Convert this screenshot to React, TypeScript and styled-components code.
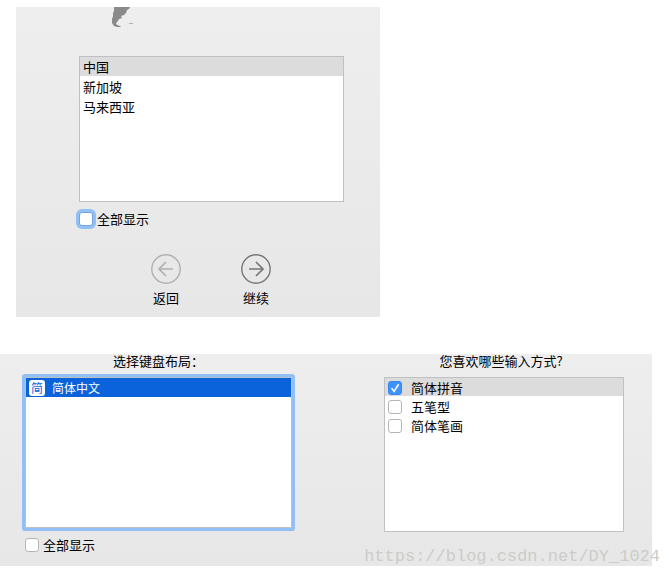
import React, { useState } from "react";
import styled, { createGlobalStyle, css } from "styled-components";

const GlobalStyle = createGlobalStyle`
  *, *::before, *::after { box-sizing: border-box; }
  body {
    margin: 0;
    background: #fff;
    color: #000;
    font-family: "Noto Sans CJK SC", sans-serif;
    font-size: 13px;
    line-height: 20px;
  }
`;

const Page = styled.main`
  position: relative;
  display: flex;
  flex-direction: column;
  gap: 37px;
  padding: 7px 17px 10px 0;
`;

const panel = css`
  background: linear-gradient(#eeeeee, #e7e7e7);
`;

const CountryPanel = styled.section`
  ${panel}
  max-width: 364px;
  margin-left: 16px;
  padding: 0 36px 9px 63px;
`;

const MapStrip = styled.div`
  height: 49px;
  padding-left: 28px;

  svg { display: block; }
`;

const List = styled.ul<{ $height: number; $focused?: boolean }>`
  height: ${(p) => p.$height}px;
  margin: 0;
  padding: 0;
  list-style: none;
  background: #fff;
  border: 1px solid #c0c0c0;
  border-radius: ${(p) => (p.$focused ? 1 : 0)}px;
  box-shadow: ${(p) => (p.$focused ? "0 0 0 3px #92bff5" : "none")};
`;

const CountryRow = styled.li<{ $selected: boolean }>`
  height: 19px;
  margin-bottom: 1px;
  padding-left: 3px;
  background: ${(p) => (p.$selected ? "#dcdcdc" : "transparent")};
  cursor: default;
`;

const LayoutRow = styled.li`
  display: flex;
  align-items: center;
  gap: 7px;
  height: 19px;
  padding-left: 3px;
  background: #0a63da;
  color: #fff;
  font-size: 12px;
`;

const LayoutBadge = styled.span`
  width: 16px;
  height: 16px;
  border-radius: 3px;
  background: #fff;
  color: #0a63da;
  line-height: 16px;
  text-align: center;
`;

const MethodRow = styled.li<{ $selected: boolean }>`
  height: 18px;
  margin-bottom: 1px;
  padding-left: 3px;
  background: ${(p) => (p.$selected ? "#dcdcdc" : "transparent")};
`;

const CheckLabel = styled.label<{ $gap: number }>`
  display: flex;
  align-items: center;
  gap: ${(p) => p.$gap}px;
`;

const Checkbox = styled.input<{ $ring?: boolean }>`
  appearance: none;
  display: grid;
  place-items: center;
  width: 14px;
  height: 14px;
  margin: 0;
  background: #fff;
  border: 1px solid ${(p) => (p.$ring ? "#74a5df" : "#b5b5b5")};
  border-radius: 3px;
  outline: none;
  box-shadow: ${(p) => (p.$ring ? "0 0 0 3px #92bff5" : "none")};

  &:checked {
    background: #3d93fb;
    border-color: #3388f2;
  }

  &:checked::before {
    content: "";
    width: 12px;
    height: 12px;
    background: #fff;
    clip-path: polygon(16% 55%, 27% 47%, 42% 67%, 74% 15%, 86% 23%, 43% 90%);
  }
`;

const ShowAll = styled.div`
  margin-top: 7px;
`;

const Navigation = styled.nav`
  display: flex;
  gap: 60px;
  margin-top: 25px;
  padding-left: 72px;
`;

const NavButton = styled.button<{ $muted?: boolean }>`
  display: flex;
  flex-direction: column;
  align-items: center;
  gap: 4px;
  width: 30px;
  padding: 0;
  border: 0;
  background: none;
  color: #000;
  font: inherit;
  white-space: nowrap;

  svg {
    display: block;
    color: ${(p) => (p.$muted ? "#b0b0b0" : "#777")};
  }
`;

const KeyboardPanel = styled.section`
  ${panel}
  display: grid;
  grid-template-columns: 267fr 240fr;
  column-gap: 92px;
  padding: 0 28px 11px 25px;
`;

const Heading = styled.h2<{ $inset?: number }>`
  height: 23px;
  margin: 0;
  padding-right: ${(p) => p.$inset ?? 0}px;
  font-size: 13px;
  font-weight: 400;
  line-height: 14px;
  text-align: center;
`;

const Watermark = styled.span`
  position: absolute;
  right: 9px;
  bottom: 9px;
  color: #ccccc8;
  font-family: "Liberation Mono", monospace;
  font-size: 17px;
  pointer-events: none;
`;

function LandTip() {
  return (
    <svg width="26" height="22" viewBox="0 0 26 22" aria-hidden="true">
      <path
        d="M7 0H23L22 2L20 3L19 6L17 8L14 9L15 11L12 12L11 14L9 16L10 18L13 19L14 20H10L7 19L5 16L5 12L6 9L6 6L7 4Z"
        fill="#8a8a8a"
      />
      <path d="M22 16.5H26" stroke="#b0b0b0" />
    </svg>
  );
}

function CircleArrow({ back }: { back?: boolean }) {
  return (
    <svg width="30" height="30" viewBox="0 0 30 30" fill="none" stroke="currentColor" strokeWidth="1.4" aria-hidden="true">
      <circle cx="15" cy="15" r="14.2" />
      <path d={back ? "M22 15H8M15 8L8 15L15 22" : "M8 15H22M15 8L22 15L15 22"} strokeWidth="1.7" />
    </svg>
  );
}

const countries = ["中国", "新加坡", "马来西亚"];
const methods = ["简体拼音", "五笔型", "简体笔画"];

export default function App() {
  const [country, setCountry] = useState(countries[0]);
  const [enabled, setEnabled] = useState([methods[0]]);

  const toggle = (name: string) =>
    setEnabled((list) => (list.includes(name) ? list.filter((n) => n !== name) : [...list, name]));

  return (
    <>
      <GlobalStyle />
      <Page>
        <CountryPanel>
          <MapStrip>
            <LandTip />
          </MapStrip>
          <List $height={146} role="listbox">
            {countries.map((name) => (
              <CountryRow
                key={name}
                role="option"
                aria-selected={name === country}
                $selected={name === country}
                onClick={() => setCountry(name)}
              >
                {name}
              </CountryRow>
            ))}
          </List>
          <ShowAll>
            <CheckLabel $gap={4}>
              <Checkbox type="checkbox" $ring />
              全部显示
            </CheckLabel>
          </ShowAll>
          <Navigation>
            <NavButton type="button" $muted>
              <CircleArrow back />
              返回
            </NavButton>
            <NavButton type="button">
              <CircleArrow />
              继续
            </NavButton>
          </Navigation>
        </CountryPanel>

        <KeyboardPanel>
          <div>
            <Heading>选择键盘布局：</Heading>
            <List $height={151} $focused role="listbox">
              <LayoutRow role="option" aria-selected>
                <LayoutBadge>简</LayoutBadge>
                简体中文
              </LayoutRow>
            </List>
            <ShowAll>
              <CheckLabel $gap={4}>
                <Checkbox type="checkbox" />
                全部显示
              </CheckLabel>
            </ShowAll>
          </div>
          <div>
            <Heading $inset={6}>您喜欢哪些输入方式?</Heading>
            <List $height={155}>
              {methods.map((name, index) => (
                <MethodRow key={name} $selected={index === 0}>
                  <CheckLabel $gap={9}>
                    <Checkbox type="checkbox" checked={enabled.includes(name)} onChange={() => toggle(name)} />
                    {name}
                  </CheckLabel>
                </MethodRow>
              ))}
            </List>
          </div>
        </KeyboardPanel>
        <Watermark>https://blog.csdn.net/DY_1024</Watermark>
      </Page>
    </>
  );
}
